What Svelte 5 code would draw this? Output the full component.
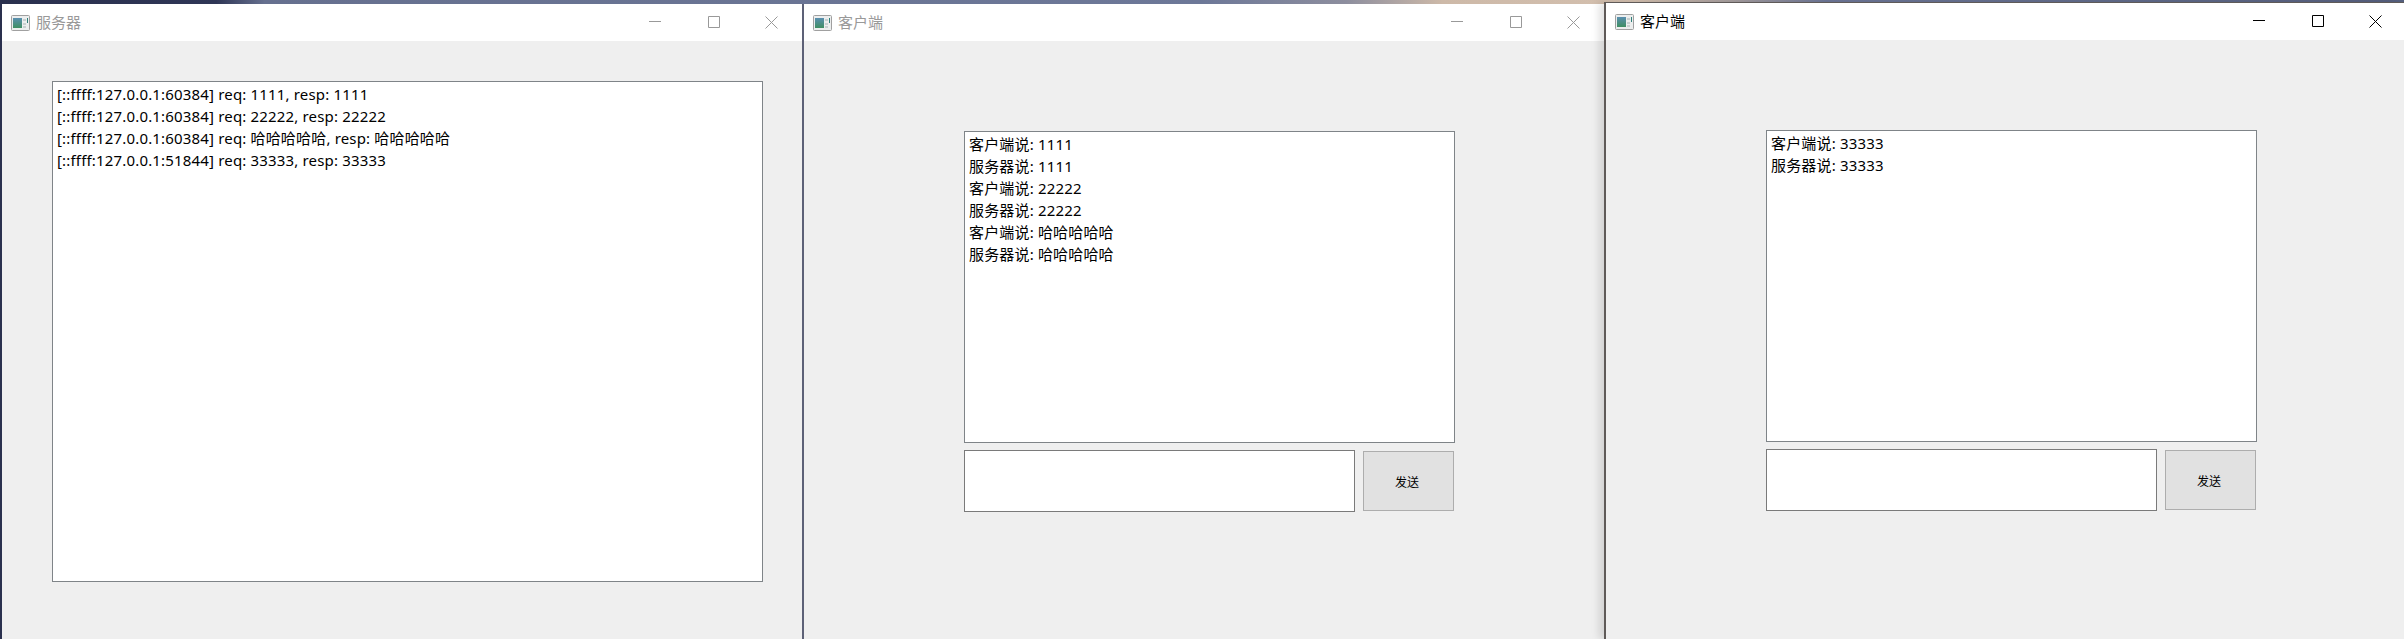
<script>
  const serverLog = [
    "[::ffff:127.0.0.1:60384] req: 1111, resp: 1111",
    "[::ffff:127.0.0.1:60384] req: 22222, resp: 22222",
    "[::ffff:127.0.0.1:60384] req: 哈哈哈哈哈, resp: 哈哈哈哈哈",
    "[::ffff:127.0.0.1:51844] req: 33333, resp: 33333",
  ];
  const clientOne = [
    "客户端说: 1111",
    "服务器说: 1111",
    "客户端说: 22222",
    "服务器说: 22222",
    "客户端说: 哈哈哈哈哈",
    "服务器说: 哈哈哈哈哈",
  ];
  const clientTwo = ["客户端说: 33333", "服务器说: 33333"];
</script>

{#snippet titlebar(title, active, id)}
  <header class="titlebar" class:active>
    <svg class="app-icon" width="19" height="16" viewBox="0 0 19 16">
      <defs>
        <linearGradient id={id} x1="0" y1="0" x2="0" y2="1">
          <stop offset="0" stop-color="#5a8fb0" />
          <stop offset="1" stop-color="#3f8f62" />
        </linearGradient>
      </defs>
      <rect x="0.5" y="0.5" width="18" height="15" rx="1" fill="#eceeee" stroke="#a0a0a0" />
      <rect x="2" y="3" width="9" height="10" fill="url(#{id})" />
      <rect x="12" y="4" width="3" height="2" fill="#c8d0d0" />
      <rect x="12" y="8" width="3" height="2" fill="#c8d0d0" />
      <rect x="12" y="11" width="3" height="2" fill="#c8d0d0" />
      <rect x="16" y="3" width="1" height="5" fill="#2f7f7a" />
    </svg>
    <span class="title">{title}</span>
    <div class="controls">
      <svg width="13" height="13" viewBox="0 0 13 13"><path d="M0 5.5H12" /></svg>
      <svg width="13" height="13" viewBox="0 0 13 13"><path d="M1.5 0.5H12.5V11.5H1.5Z" /></svg>
      <svg width="13" height="13" viewBox="0 0 13 13"><path d="M0.5 0.5L12.5 12.5M12.5 0.5L0.5 12.5" /></svg>
    </div>
  </header>
{/snippet}

{#snippet client(lines, active, id)}
  <section class="window client" class:front={active}>
    {@render titlebar("客户端", active, id)}
    <div class="client-body">
      <div class="log">
        {#each lines as line}<p>{line}</p>{/each}
      </div>
      <div class="send-row">
        <div class="input"></div>
        <button>发送</button>
      </div>
    </div>
  </section>
{/snippet}

<main class="desktop">
  <section class="window server">
    {@render titlebar("服务器", false, "icon-a")}
    <div class="server-body">
      <div class="log">
        {#each serverLog as line}<p>{line}</p>{/each}
      </div>
    </div>
  </section>
  {@render client(clientOne, false, "icon-b")}
  {@render client(clientTwo, true, "icon-c")}
</main>

<style>
  :global(body) {
    margin: 0;
    background: #3b4668;
  }
  .desktop {
    height: 639px;
    width: 2404px;
    overflow: hidden;
    box-sizing: border-box;
    padding-left: 2px;
    display: flex;
    background: linear-gradient(90deg, #2a304e 0%, #2f3656 9%, #66708f 11%, #6d7898 50%, #8d8e9e 56%, #cdb9a8 60%, #d3bfae 68%, #a89f9f 72%, #6d7798 76%, #56607f 100%);
    font-family: "Noto Sans", "Noto Sans CJK SC", sans-serif;
    color: #000;
  }
  .window {
    margin-top: 4px;
    background: #efefef;
    display: flex;
    flex-direction: column;
    flex: none;
    box-sizing: border-box;
    border-left: 2px solid #5d6177;
    width: 802px;
  }
  .server {
    width: 800px;
    border-left: 0;
  }
  .client.front {
    margin-top: 2px;
    width: 800px;
    border-left-color: #5f5a58;
    border-top: 1px solid #5f5a58;
    box-shadow: -5px 0 8px rgba(0, 0, 0, 0.12);
  }
  .titlebar {
    height: 37px;
    flex: none;
    background: #fff;
    display: flex;
    align-items: center;
    padding-left: 9px;
    color: #999;
  }
  .titlebar.active {
    color: #000;
  }
  .title {
    margin-left: 6px;
    margin-bottom: 2px;
    font-size: 15px;
  }
  .controls {
    margin-left: auto;
    margin-right: 24px;
    display: flex;
    gap: 45px;
  }
  .front .controls {
    margin-right: 22px;
  }
  .controls svg {
    display: block;
  }
  .controls path {
    fill: none;
    stroke: currentColor;
    stroke-width: 1;
  }
  .log {
    background: #fff;
    border: 1px solid #7f8488;
    box-sizing: border-box;
    padding: 1px 4px;
    font-size: 15px;
    line-height: 22px;
    letter-spacing: 0.17px;
  }
  .log p {
    margin: 0;
  }
  .server-body {
    padding: 40px 0 0 50px;
  }
  .server-body .log {
    width: 711px;
    height: 501px;
  }
  .client-body {
    padding: 90px 0 0 160px;
  }
  .client .log {
    width: 491px;
    height: 312px;
  }
  .send-row {
    margin-top: 7px;
    display: flex;
    align-items: center;
    gap: 8px;
  }
  .input {
    width: 391px;
    height: 62px;
    box-sizing: border-box;
    background: #fff;
    border: 1px solid #7a7a7a;
  }
  button {
    width: 91px;
    height: 60px;
    box-sizing: border-box;
    background: #e1e1e1;
    border: 1px solid #adadad;
    font: 12px "Noto Sans CJK SC", sans-serif;
    color: #000;
    padding: 0 3px 0 0;
  }
</style>
